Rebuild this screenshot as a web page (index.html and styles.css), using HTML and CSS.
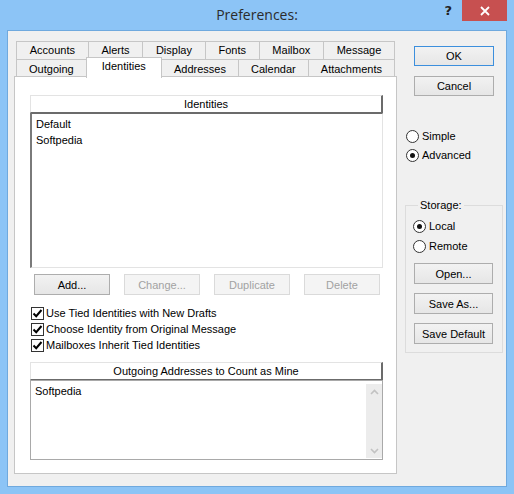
FILE: index.html
```html
<!DOCTYPE html>
<html lang="en">
<head>
    <meta charset="UTF-8">
    <title>Preferences:</title>
    <link rel="stylesheet" href="styles.css">
</head>
<body>
    <div class="window">
        <div class="titlebar">
            <span></span>
            <span class="title">Preferences:</span>
            <div class="caption-buttons">
                <span class="help">?</span>
                <span class="close">
                    <svg width="10" height="10" viewBox="0 0 10 10"><path d="M1 1 L9 9 M9 1 L1 9" stroke="#fff" stroke-width="1.8"/></svg>
                </span>
            </div>
        </div>

        <div class="client">
            <div class="left">
                <div class="tabs">
                    <div class="tab-row back">
                        <span class="tab">Accounts</span>
                        <span class="tab">Alerts</span>
                        <span class="tab">Display</span>
                        <span class="tab">Fonts</span>
                        <span class="tab">Mailbox</span>
                        <span class="tab">Message</span>
                    </div>
                    <div class="tab-row front">
                        <span class="tab">Outgoing</span>
                        <span class="tab active">Identities</span>
                        <span class="tab">Addresses</span>
                        <span class="tab">Calendar</span>
                        <span class="tab">Attachments</span>
                    </div>
                </div>

                <div class="panel">
                    <div class="col-header">Identities</div>
                    <div class="listbox identities">
                        <div class="item">Default</div>
                        <div class="item">Softpedia</div>
                    </div>

                    <div class="button-row">
                        <button class="btn">Add...</button>
                        <button class="btn" disabled>Change...</button>
                        <button class="btn" disabled>Duplicate</button>
                        <button class="btn" disabled>Delete</button>
                    </div>

                    <div class="checks">
                        <div class="check"><span class="box"><svg width="11" height="11" viewBox="0 0 11 11"><path d="M1.5 5.5 L4.2 8.2 L9.5 2" fill="none" stroke="#000" stroke-width="2"/></svg></span>Use Tied Identities with New Drafts</div>
                        <div class="check"><span class="box"><svg width="11" height="11" viewBox="0 0 11 11"><path d="M1.5 5.5 L4.2 8.2 L9.5 2" fill="none" stroke="#000" stroke-width="2"/></svg></span>Choose Identity from Original Message</div>
                        <div class="check"><span class="box"><svg width="11" height="11" viewBox="0 0 11 11"><path d="M1.5 5.5 L4.2 8.2 L9.5 2" fill="none" stroke="#000" stroke-width="2"/></svg></span>Mailboxes Inherit Tied Identities</div>
                    </div>

                    <div class="col-header">Outgoing Addresses to Count as Mine</div>
                    <div class="listbox outgoing">
                        <div class="items">
                            <div class="item">Softpedia</div>
                        </div>
                        <div class="scrollbar">
                            <svg width="9" height="6" viewBox="0 0 9 6"><path d="M1 5 L4.5 1.5 L8 5" fill="none" stroke="#c2c2c2" stroke-width="1.6"/></svg>
                            <svg width="9" height="6" viewBox="0 0 9 6"><path d="M1 1 L4.5 4.5 L8 1" fill="none" stroke="#c2c2c2" stroke-width="1.6"/></svg>
                        </div>
                    </div>
                </div>
            </div>

            <div class="side">
                <button class="btn side-btn default">OK</button>
                <button class="btn side-btn">Cancel</button>

                <div class="radios mode">
                    <div class="radio-row"><span class="radio"></span>Simple</div>
                    <div class="radio-row"><span class="radio on"></span>Advanced</div>
                </div>

                <fieldset class="group">
                    <legend>Storage:</legend>
                    <div class="radios storage">
                        <div class="radio-row"><span class="radio on"></span>Local</div>
                        <div class="radio-row"><span class="radio"></span>Remote</div>
                    </div>
                    <div class="group-buttons">
                        <button class="btn">Open...</button>
                        <button class="btn">Save As...</button>
                        <button class="btn">Save Default</button>
                    </div>
                </fieldset>
            </div>
        </div>
    </div>
</body>
</html>
```

FILE: styles.css
```css
/* Base */
body {
    margin: 0;
    font-family: "Liberation Sans", Arial, sans-serif;
    font-size: 11px;
    color: #000;
}

.window {
    width: 514px;
    height: 494px;
    background-color: #8cc4f6;
    display: flex;
    flex-direction: column;
}

/* Title bar */
.titlebar {
    height: 30px;
    display: grid;
    grid-template-columns: 1fr auto 1fr;
    align-items: start;
}

.title {
    font-family: "Open Sans", "Liberation Sans", sans-serif;
    font-size: 14px;
    color: #2b2b2b;
    line-height: 30px;
}

.caption-buttons {
    justify-self: end;
    display: flex;
    align-items: flex-start;
    margin-right: 7px;
}

.help {
    font-family: "DejaVu Sans", sans-serif;
    font-weight: bold;
    font-size: 13px;
    color: #222;
    line-height: 22px;
    margin-right: 10px;
}

.close {
    width: 45px;
    height: 21px;
    background-color: #c75050;
    display: flex;
    align-items: center;
    justify-content: center;
}

/* Client area */
.client {
    flex: 1;
    margin: 0 7px 7px;
    background-color: #f0f0f0;
    border: 1px solid #6fa9de;
    padding: 10px 3px 0 6px;
    display: flex;
    gap: 8px;
}

.left {
    width: 383px;
    display: flex;
    flex-direction: column;
}

/* Tabs */
.tabs {
    height: 35px;
}

.tab-row {
    display: flex;
    padding: 0 2px;
}

.tab {
    flex: 1 1 auto;
    text-align: center;
    background-color: #f0f0f0;
    border: 1px solid #c6c6c6;
    border-bottom: none;
    margin-right: -1px;
    white-space: nowrap;
}

.tab-row .tab:last-child {
    margin-right: 0;
}

.back .tab {
    height: 17px;
    line-height: 17px;
}

.front .tab {
    height: 17px;
    line-height: 19px;
}

.tab.active {
    position: relative;
    z-index: 2;
    padding: 0 3px;
    background-color: #fff;
    height: 20px;
    margin-top: -2px;
    line-height: 17px;
}

/* Panel */
.panel {
    height: 398px;
    box-sizing: border-box;
    background-color: #fff;
    border: 1px solid #c6c6c6;
    padding: 18px 13px 0 15px;
    display: flex;
    flex-direction: column;
}

.col-header {
    height: 18px;
    box-sizing: border-box;
    text-align: center;
    line-height: 16px;
    border-top: 1px solid #e3e3e3;
    border-left: 1px solid #e3e3e3;
    border-right: 2px solid #6b6b6b;
    border-bottom: 1px solid #6b6b6b;
}

.listbox {
    box-sizing: border-box;
}

.identities {
    height: 155px;
    border-top: 1px solid #6b6b6b;
    border-left: 2px solid #7a7a7a;
    border-right: 1px solid #e3e3e3;
    border-bottom: 1px solid #e3e3e3;
    padding: 2px 4px;
}

.item {
    line-height: 16px;
}

.button-row {
    display: flex;
    gap: 14px;
    margin: 6px 0 0 4px;
}

.btn {
    font-family: "Liberation Sans", Arial, sans-serif;
    font-size: 11px;
    color: #000;
    width: 76px;
    height: 21px;
    padding: 0;
    background: linear-gradient(#f2f2f2, #e6e6e6);
    border: 1px solid #adadad;
    border-radius: 0;
}

.btn:disabled {
    color: #a2a2a2;
    background: #f4f4f4;
    border-color: #dadada;
}

.checks {
    margin-top: 10px;
}

.check {
    display: flex;
    align-items: center;
    height: 16px;
    margin-left: 1px;
}

.box {
    width: 11px;
    height: 11px;
    border: 1px solid #333;
    background-color: #fff;
    margin-right: 2px;
    display: flex;
}

.checks + .col-header {
    margin-top: 9px;
}

.outgoing {
    height: 80px;
    border: 1px solid #a9a9a9;
    display: flex;
}

.outgoing .items {
    flex: 1;
    padding: 2px 4px;
}

.scrollbar {
    width: 16px;
    margin: 3px 0 1px;
    background-color: #ececec;
    display: flex;
    flex-direction: column;
    justify-content: space-between;
    align-items: center;
    padding: 5px 0 4px;
}

/* Right column */
.side {
    width: 98px;
    display: flex;
    flex-direction: column;
}

.side-btn {
    width: 80px;
    height: 20px;
    margin-left: 9px;
}

.side-btn.default {
    margin-top: 5px;
    border-color: #3c8fdd;
}

.side-btn + .side-btn {
    margin-top: 10px;
}

.radios {
    display: flex;
    flex-direction: column;
    gap: 3px;
}

.radios.storage {
    gap: 4px;
}

.mode {
    margin-top: 32px;
    margin-left: 1px;
}

.radio-row {
    display: flex;
    align-items: center;
    height: 16px;
}

.radio {
    width: 11px;
    height: 11px;
    border: 1px solid #333;
    border-radius: 50%;
    background-color: #fff;
    margin-right: 3px;
    display: flex;
    align-items: center;
    justify-content: center;
}

.radio.on::after {
    content: "";
    width: 5px;
    height: 5px;
    border-radius: 50%;
    background-color: #111;
}

/* Storage group */
.group {
    margin: 36px 0 0;
    padding: 7px 0 8px 7px;
    border: 1px solid #dcdcdc;
    min-width: 0;
}

.group legend {
    padding: 0 2px;
    margin-left: 5px;
}

.group-buttons {
    display: flex;
    flex-direction: column;
    gap: 9px;
    margin-top: 9px;
    margin-left: 1px;
}

.group-buttons .btn {
    width: 79px;
}
```
